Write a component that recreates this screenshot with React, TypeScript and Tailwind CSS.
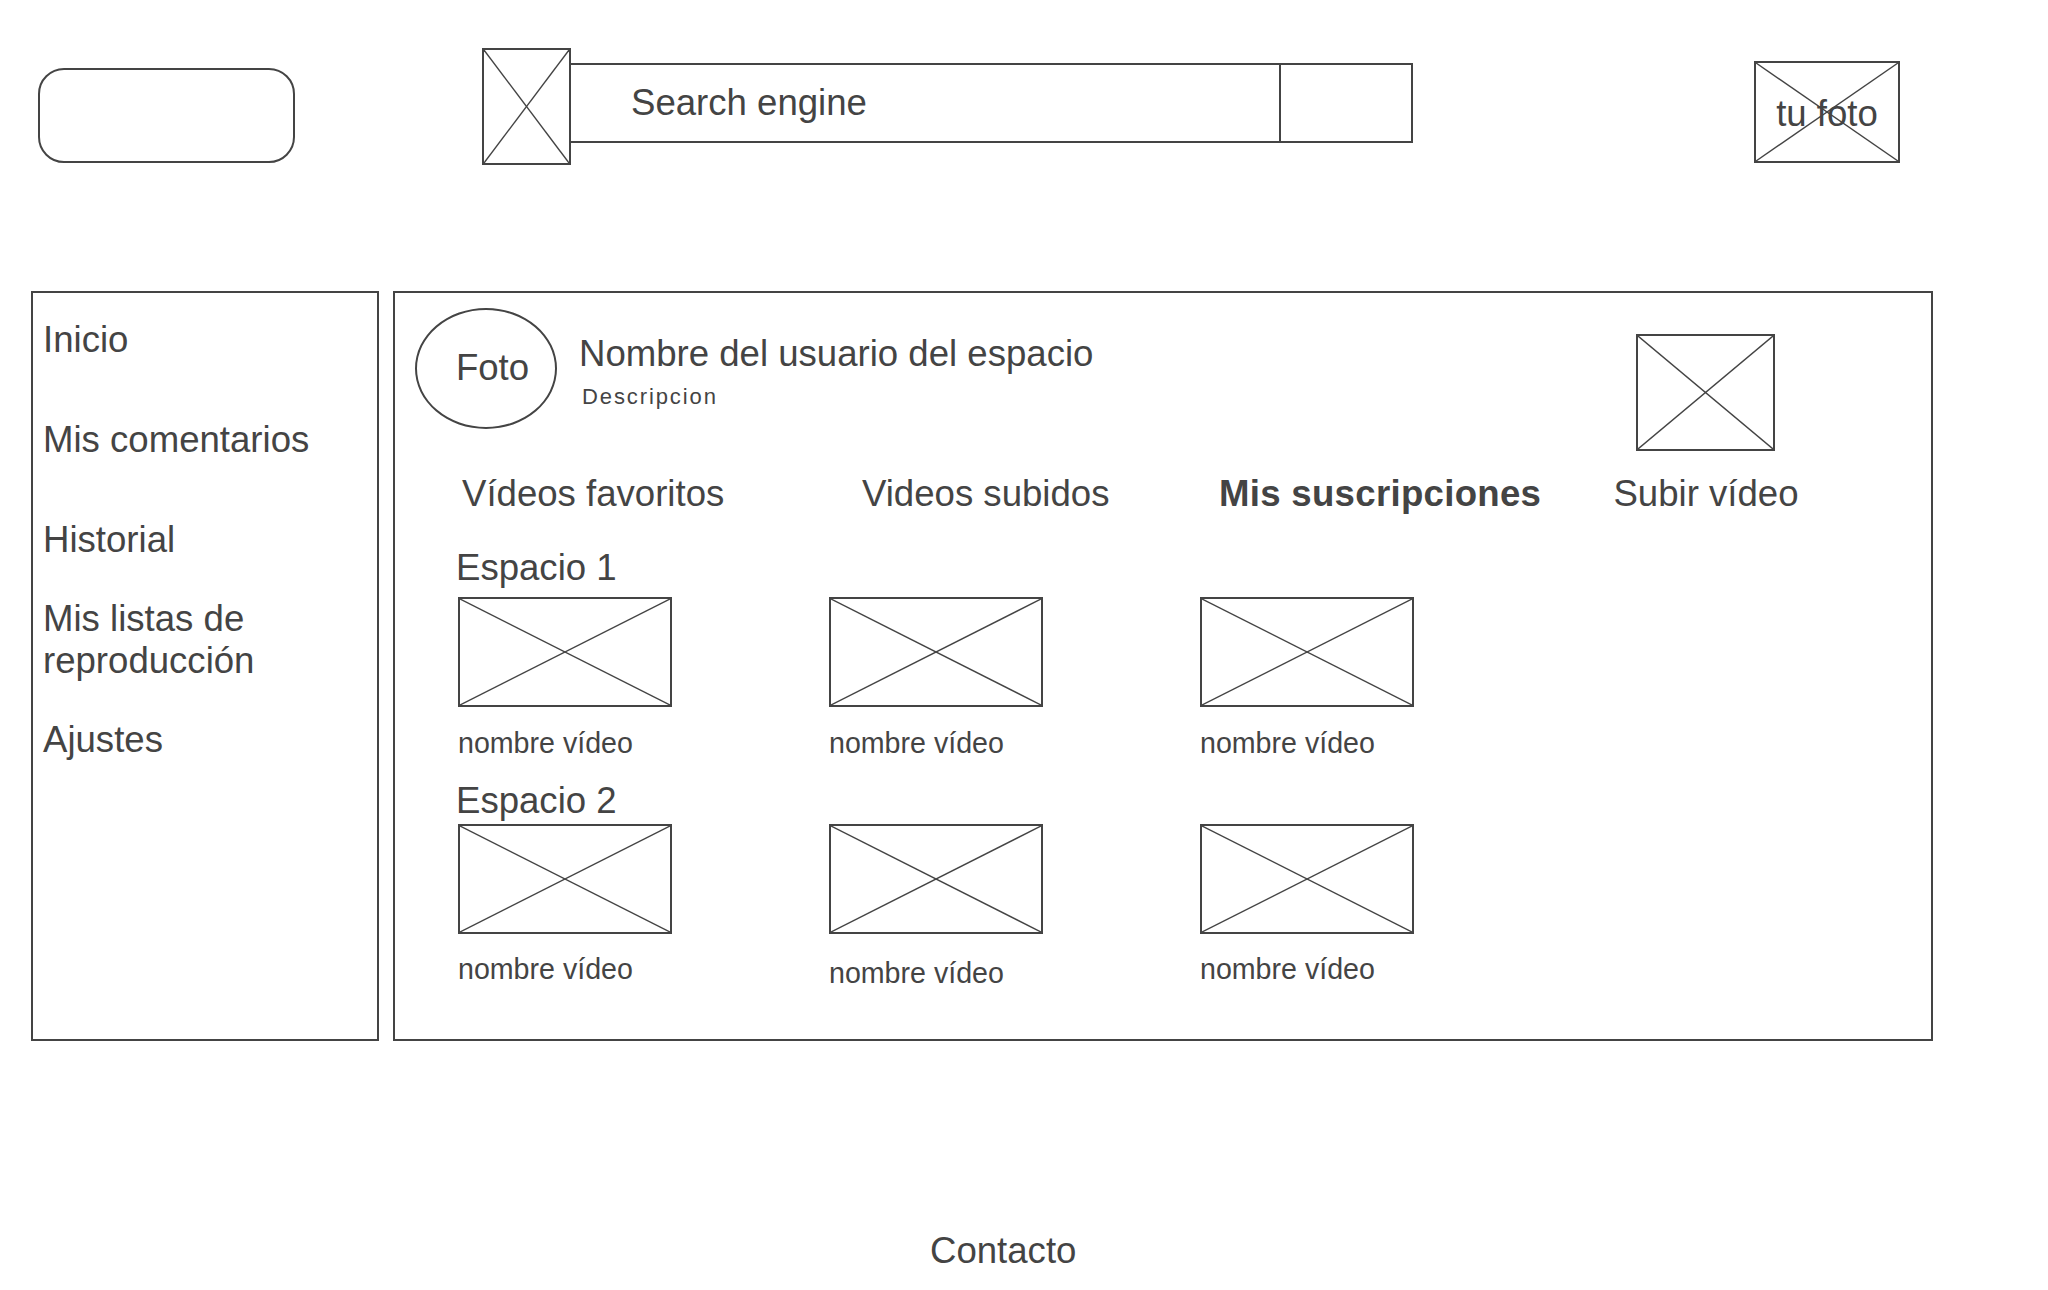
import type { ReactNode } from "react";

function Cross() {
  return (
    <svg className="absolute inset-0 h-full w-full" viewBox="0 0 100 100" preserveAspectRatio="none">
      <line x1="0" y1="0" x2="100" y2="100" stroke="#444" strokeWidth="1.4" vectorEffect="non-scaling-stroke" />
      <line x1="100" y1="0" x2="0" y2="100" stroke="#444" strokeWidth="1.4" vectorEffect="non-scaling-stroke" />
    </svg>
  );
}

function ImageBox({ className = "", children }: { className?: string; children?: ReactNode }) {
  return (
    <div className={`relative flex shrink-0 items-center justify-center border-2 border-[#444] ${className}`}>
      <Cross />
      {children ? <span className="relative">{children}</span> : null}
    </div>
  );
}

function VideoCard({ captionClass = "mt-[20px]" }: { captionClass?: string }) {
  return (
    <div className="w-[214px]">
      <ImageBox className="h-[110px] w-[214px]" />
      <p className={`${captionClass} text-[28.6px] leading-[32px]`}>nombre vídeo</p>
    </div>
  );
}

export default function App() {
  return (
    <div className="h-[1290px] w-[2048px] overflow-hidden bg-white font-['Liberation_Sans',Arial,sans-serif] text-[#444]">
      <header className="flex h-[291px] items-start pl-[38px]">
        <div className="mt-[68px] h-[95px] w-[257px] shrink-0 rounded-[26px] border-2 border-[#444]" />
        <div className="ml-[187px] mt-[48px] flex shrink-0 items-start">
          <ImageBox className="h-[117px] w-[89px]" />
          <div className="mt-[15px] flex h-[80px]">
            <div className="flex w-[708px] items-center border-y-2 border-[#444] pl-[60px] text-[36.6px]">Search engine</div>
            <div className="w-[134px] border-2 border-[#444]" />
          </div>
        </div>
        <ImageBox className="ml-[341px] mt-[61px] h-[102px] w-[146px] pt-[5px] text-[36.6px]">tu foto</ImageBox>
      </header>

      <div className="flex gap-[14px] pl-[31px]">
        <nav className="h-[750px] w-[348px] shrink-0 border-2 border-[#444] pl-[10px] pt-[26px] text-[36.6px] leading-[42px]">
          <p>Inicio</p>
          <p className="mt-[58px]">Mis comentarios</p>
          <p className="mt-[58px]">Historial</p>
          <p className="mt-[37px]">
            Mis listas de
            <br />
            reproducción
          </p>
          <p className="mt-[37px]">Ajustes</p>
        </nav>

        <main className="h-[750px] w-[1540px] shrink-0 border-2 border-[#444]">
          <div className="flex items-start">
            <div className="ml-[20px] mt-[15px] flex h-[121px] w-[142px] items-center justify-center rounded-[50%] border-2 border-[#444] pl-[13px] text-[36.6px]">
              Foto
            </div>
            <div className="ml-[22px] mt-[40px]">
              <p className="text-[36.6px] leading-[42px]">Nombre del usuario del espacio</p>
              <p className="mt-[9px] pl-[3px] text-[22px] leading-[26px] tracking-[1.9px]">Descripcion</p>
            </div>
            <ImageBox className="ml-auto mr-[156px] mt-[41px] h-[117px] w-[139px]" />
          </div>

          <div className="mt-[22px] flex pl-[67px] text-[36.6px] leading-[42px]">
            <span className="w-[400px]">Vídeos favoritos</span>
            <span className="w-[354px]">Videos subidos</span>
            <span className="w-[390px] pl-[3px] font-bold tracking-[0.3px]">Mis suscripciones</span>
            <span className="w-[200px] text-center">Subir vídeo</span>
          </div>

          <p className="mt-[32px] pl-[61px] text-[36.6px] leading-[42px]">Espacio 1</p>
          <div className="mt-[8px] flex gap-[157px] pl-[63px]">
            <VideoCard />
            <VideoCard />
            <VideoCard />
          </div>

          <p className="mt-[21px] pl-[61px] text-[36.6px] leading-[42px]">Espacio 2</p>
          <div className="mt-[2px] flex gap-[157px] pl-[63px]">
            <VideoCard captionClass="mt-[19px]" />
            <VideoCard captionClass="mt-[23px]" />
            <VideoCard captionClass="mt-[19px]" />
          </div>
        </main>
      </div>

      <footer className="pl-[930px] pt-[189px] text-[36.6px] leading-[42px]">Contacto</footer>
    </div>
  );
}
